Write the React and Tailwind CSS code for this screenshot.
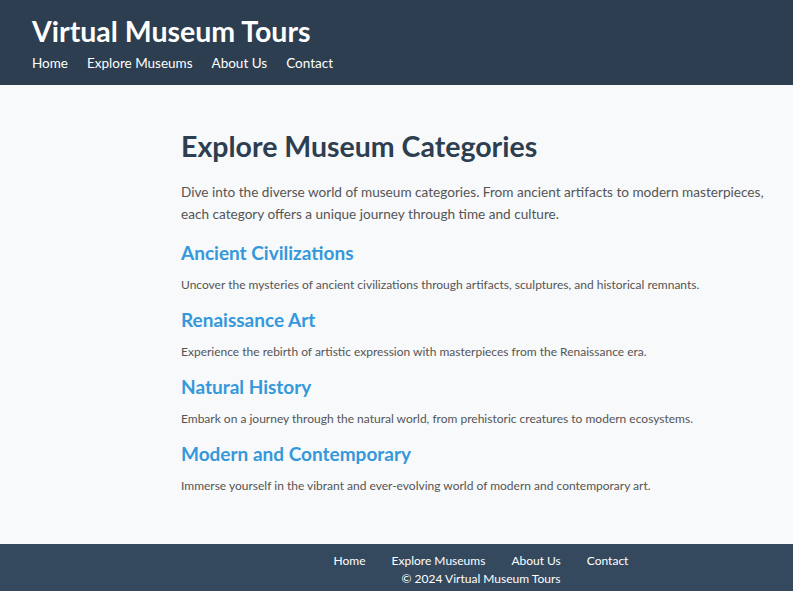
import React from 'react';

const navLinks = ['Home', 'Explore Museums', 'About Us', 'Contact'];

const categories = [
  {
    title: 'Ancient Civilizations',
    text: 'Uncover the mysteries of ancient civilizations through artifacts, sculptures, and historical remnants.',
  },
  {
    title: 'Renaissance Art',
    text: 'Experience the rebirth of artistic expression with masterpieces from the Renaissance era.',
  },
  {
    title: 'Natural History',
    text: 'Embark on a journey through the natural world, from prehistoric creatures to modern ecosystems.',
  },
  {
    title: 'Modern and Contemporary',
    text: 'Immerse yourself in the vibrant and ever-evolving world of modern and contemporary art.',
  },
];

const App = () => {
  return (
    <div className="min-h-screen flex flex-col bg-[#f7f9fa] font-['Segoe_UI','Lato',sans-serif]">
      {/* Header */}
      <header className="bg-[#2c3e50] text-white px-8 pt-[14px] pb-[12px]">
        <h1 className="text-[28.5px] leading-[34px] font-bold">Virtual Museum Tours</h1>
        <nav className="mt-[5px] flex gap-[19px] text-[13.5px] leading-[20px]">
          {navLinks.map((link) => (
            <a key={link} href="#" className="text-white">
              {link}
            </a>
          ))}
        </nav>
      </header>

      {/* Main */}
      <main className="flex-1 pl-[181px] pr-[12px] pt-[44px] pb-8">
        <h2 className="text-[28.5px] leading-[34px] font-bold text-[#2c3e50] mb-[18px]">
          Explore Museum Categories
        </h2>
        <p className="text-[13.6px] leading-[22px] text-[#555] mb-[16px]">
          Dive into the diverse world of museum categories. From ancient artifacts to modern masterpieces, each
          category offers a unique journey through time and culture.
        </p>
        {categories.map((c) => (
          <section key={c.title} className="mb-[14px]">
            <h3 className="text-[19px] leading-[24px] font-bold text-[#3498db] mb-[11px]">{c.title}</h3>
            <p className="text-[12px] leading-[18px] text-[#555]">{c.text}</p>
          </section>
        ))}
      </main>

      {/* Footer */}
      <footer className="bg-[#34495e] text-white pl-[181px] pr-[12px] pt-[8px] pb-[3px] text-center text-[12px] leading-[18px]">
        <div className="flex justify-center gap-[26px]">
          {navLinks.map((link) => (
            <a key={link} href="#" className="text-white">
              {link}
            </a>
          ))}
        </div>
        <p>© 2024 Virtual Museum Tours</p>
      </footer>
    </div>
  );
};

export default App;
